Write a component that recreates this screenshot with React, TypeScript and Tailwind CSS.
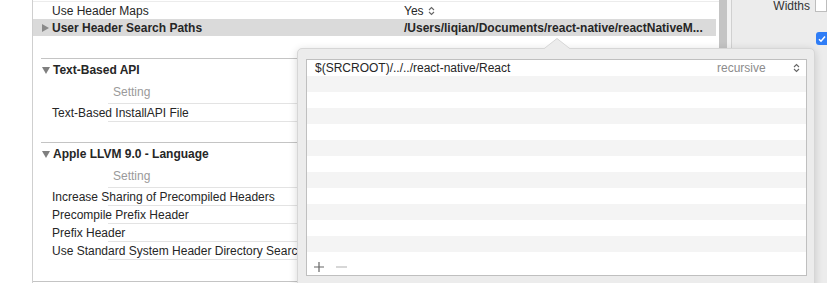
import React from 'react';

const font = { fontFamily: '"Liberation Sans", Arial, sans-serif' };

function UpDown({ color = '#555' }: { color?: string }) {
  return (
    <svg width="7" height="10" viewBox="0 0 7 10" fill="none" stroke={color} strokeWidth="1.1">
      <path d="M1 4 L3.5 1.5 L6 4" />
      <path d="M1 6 L3.5 8.5 L6 6" />
    </svg>
  );
}

function TriDown() {
  return (
    <svg width="8" height="7" viewBox="0 0 8 7">
      <path d="M0 0 H8 L4 7 Z" fill="#7f7f7f" />
    </svg>
  );
}

function TriRight() {
  return (
    <svg width="7" height="8" viewBox="0 0 7 8">
      <path d="M0 0 L7 4 L0 8 Z" fill="#8a8a8a" />
    </svg>
  );
}

function SettingRow({ label }: { label: string }) {
  return (
    <div className="ml-[67px] h-[18px] border-t border-[#e3e3e3] flex items-center">
      <span className="-ml-[56px] whitespace-nowrap">{label}</span>
    </div>
  );
}

function Section({ title, rows }: { title: string; rows: string[] }) {
  return (
    <div className="ml-[8px] border-t border-[#c4c4c4]">
      <div className="h-[22px] flex items-center pl-[1px]">
        <span className="w-[11px] flex items-center">
          <TriDown />
        </span>
        <span className="font-bold">{title}</span>
      </div>
      <div className="h-[22px] flex items-center pl-[72px] text-[#9a9a9a]">Setting</div>
      {rows.map((r) => (
        <SettingRow key={r} label={r} />
      ))}
      <div className="ml-[67px] border-t border-[#e3e3e3]" />
    </div>
  );
}

export default function App() {
  const stripes = Array.from({ length: 11 });
  return (
    <div className="relative h-[283px] w-[827px] overflow-hidden bg-white text-[12px] text-[#262626]" style={font}>
      <div className="flex h-full">
        <div className="w-[33px] border-r border-[#cfcfcf]" />

        {/* settings list */}
        <div className="flex-1 pt-[1px]">
          <div className="border-t border-[#ececec] h-[18px] flex items-center">
            <span className="pl-[19px] w-[371px]">Use Header Maps</span>
            <span className="flex items-center gap-[4px]">
              Yes <UpDown color="#666" />
            </span>
          </div>
          <div className="h-[17px] bg-[#dadada] mr-[3px] flex items-center font-bold">
            <span className="pl-[9px] w-[19px] flex items-center">
              <TriRight />
            </span>
            <span className="w-[352px]">User Header Search Paths</span>
            <span className="whitespace-nowrap">/Users/liqian/Documents/react-native/reactNativeM...</span>
          </div>
          <div className="h-[22px]" />
          <Section title="Text-Based API" rows={['Text-Based InstallAPI File']} />
          <div className="h-[20px]" />
          <Section
            title="Apple LLVM 9.0 - Language"
            rows={[
              'Increase Sharing of Precompiled Headers',
              'Precompile Prefix Header',
              'Prefix Header',
              'Use Standard System Header Directory Search',
            ]}
          />
          <div className="h-[21px]" />
          <div className="border-t border-[#c4c4c4]" />
        </div>

        {/* scrollbar */}
        <div className="w-[12px] flex">
          <div className="w-[8px] bg-[#c4c4c4]" />
          <div className="flex-1 bg-[#f2f2f2]" />
        </div>

        {/* inspector */}
        <div className="w-[96px] border-l border-[#d0d0d0] bg-[#ececec] flex flex-col">
          <div className="flex items-start justify-end gap-[5px] h-[14px]">
            <span className="leading-[12px] text-[#333]">Widths</span>
            <div className="w-[12px] h-[13px] -mt-[1px] bg-white border border-[#bdbdbd]" />
          </div>
          <div className="flex justify-end mt-[18px]">
            <div className="w-[11px] h-[13px] bg-[#2f7df6] rounded-l-[3px] flex items-center justify-center">
              <svg width="8" height="8" viewBox="0 0 8 8" fill="none" stroke="white" strokeWidth="1.5">
                <path d="M1 4.2 L3 6.2 L7 1.5" />
              </svg>
            </div>
          </div>
        </div>
      </div>

      {/* popover */}
      <div className="absolute left-[297px] top-[48px] w-[518px] h-[250px] bg-[#ececec] border border-[#d6d6d6] rounded-[5px] shadow-[0_2px_8px_rgba(0,0,0,0.16)] pt-[10px] pl-[8px] pr-[7px]">
        <svg className="absolute -top-[11px] left-[245px]" width="28" height="12" viewBox="0 0 28 12">
          <path d="M0 11.5 L14 0.5 L28 11.5" fill="#ececec" stroke="#d6d6d6" strokeWidth="1" />
          <rect x="0" y="11" width="28" height="2" fill="#ececec" />
        </svg>
        <div className="border border-[#bfbfbf] bg-white h-[217px] flex flex-col">
          <div className="h-[16px] flex items-center pl-[8px] pr-[6px]">
            <span className="flex-1">$(SRCROOT)/../../react-native/React</span>
            <span className="text-[#8c8c8c] w-[76px]">recursive</span>
            <UpDown color="#666" />
          </div>
          {stripes.map((_, i) => (
            <div key={i} className={`h-[16px] ${i % 2 === 0 ? 'bg-[#f4f4f4]' : 'bg-white'}`} />
          ))}
          <div className="flex-1 flex items-end gap-[10px] pl-[6px] pb-[2px]">
            <svg width="12" height="12" viewBox="0 0 12 12" stroke="#666" strokeWidth="1.2">
              <path d="M6 1 V11 M1 6 H11" />
            </svg>
            <svg width="13" height="12" viewBox="0 0 13 12" stroke="#bdbdbd" strokeWidth="1.2">
              <path d="M1 6 H12" />
            </svg>
          </div>
        </div>
      </div>
    </div>
  );
}
